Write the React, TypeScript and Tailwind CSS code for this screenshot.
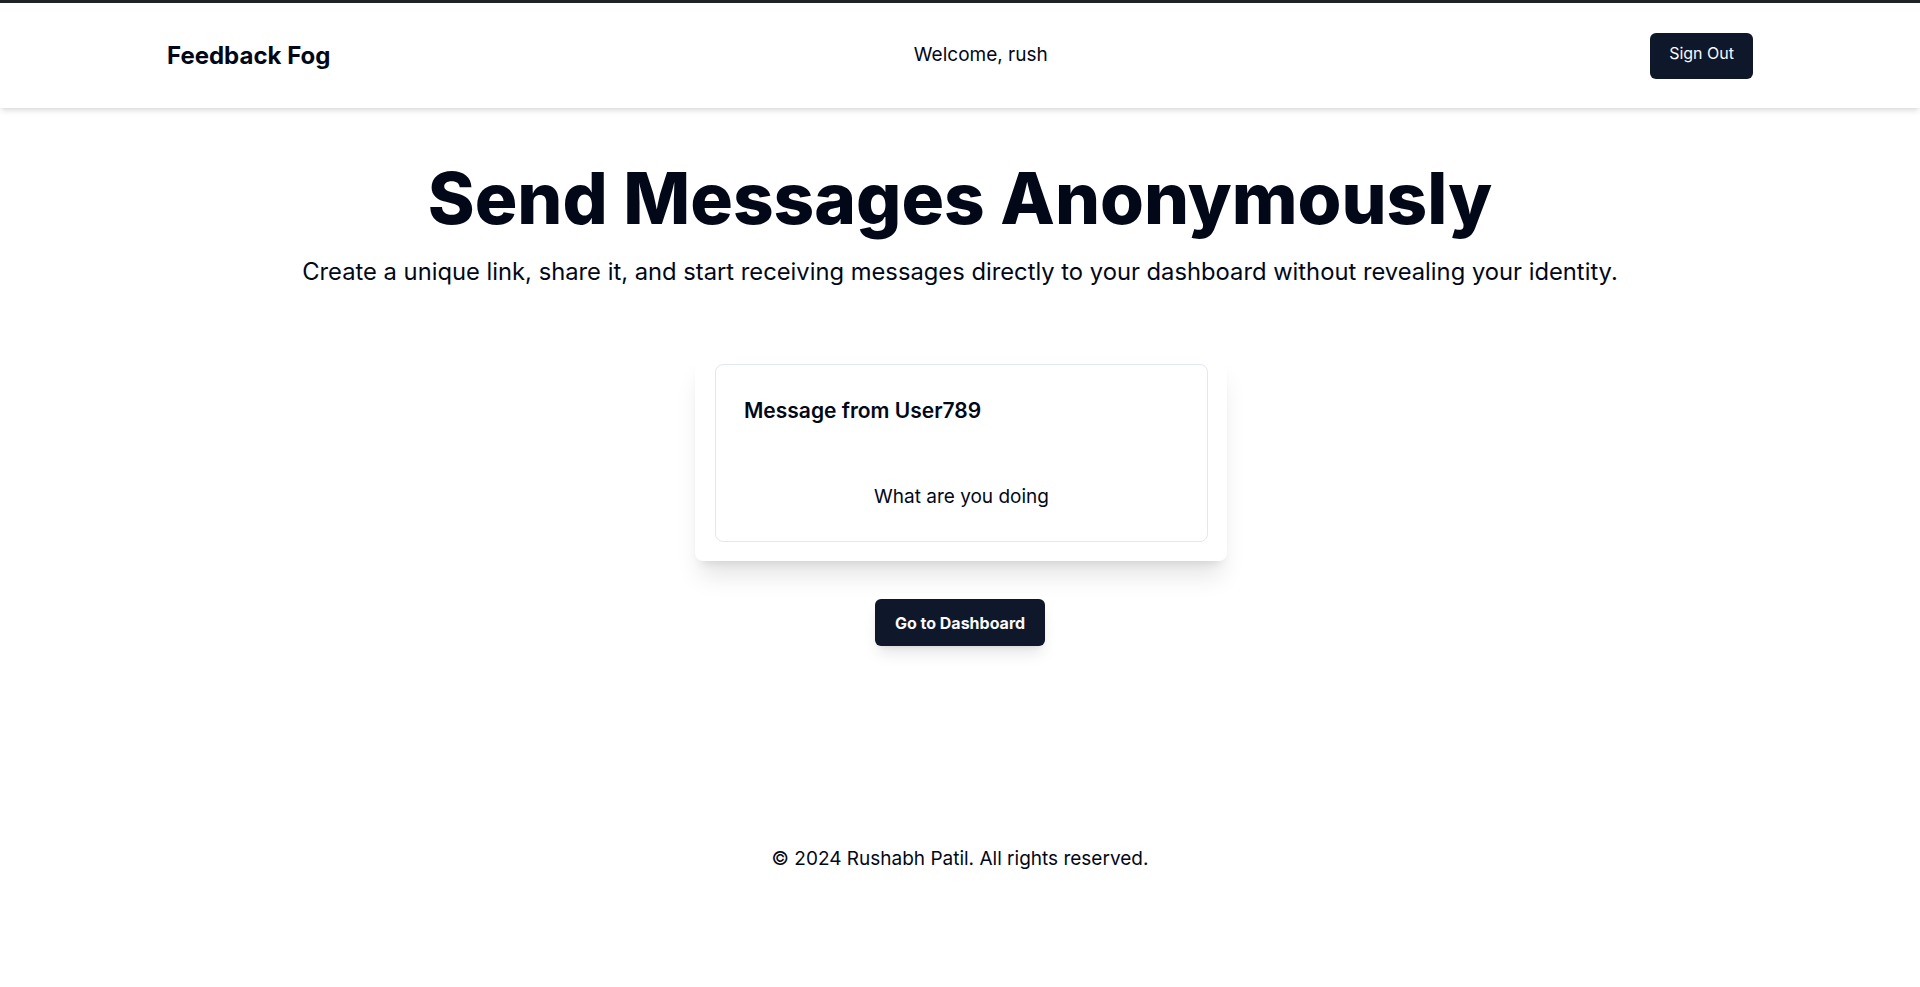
import React from "react";

export default function App() {
  return (
    <div className="min-h-screen bg-white flex flex-col font-['Inter',sans-serif] text-[#020817]">
      <div className="h-[3px] bg-[#1f2328]" />
      <nav className="h-[105px] bg-white shadow-md relative z-10">
        <div className="mx-auto w-[1586px] h-full flex items-center justify-between">
          <a className="text-2xl font-bold text-[#020817]">Feedback Fog</a>
          <span className="text-[19px] leading-7 text-[#020817] mr-[19px] mb-[2px]">Welcome, rush</span>
          <button className="h-[46px] px-[19px] pb-[5px] rounded-md bg-[#0f172a] text-[#f8fafc] text-base font-normal">
            Sign Out
          </button>
        </div>
      </nav>

      <main className="flex flex-col items-center pt-[55px]">
        <h1 className="text-[71px] leading-none font-extrabold text-[#020817] text-center">
          Send Messages Anonymously
        </h1>
        <p className="mt-[22px] text-[23.75px] leading-8 text-[#020817] text-center">
          Create a unique link, share it, and start receiving messages directly to your dashboard without revealing your identity.
        </p>

        <div className="mt-[67px] w-[532px] ml-[2px] bg-white rounded-lg shadow-xl pl-[20px] pr-[19px] pt-[9px] pb-[19px]">
          <div className="h-[178px] rounded-lg border border-[#e2e8f0] bg-white flex flex-col">
            <div className="px-[28px] pt-[35px]">
              <h3 className="text-[21px] leading-none font-semibold text-[#020817]">Message from User789</h3>
            </div>
            <div className="mt-[62px] text-center text-[19px] leading-7 text-[#020817]">What are you doing</div>
          </div>
        </div>

        <button className="mt-[38px] h-[47px] px-[20px] rounded-md bg-[#0f172a] text-[#f8fafc] text-base font-bold shadow-lg">
          Go to Dashboard
        </button>
      </main>

      <footer className="mt-[199px] text-center text-[19px] leading-7 text-[#020817]">
        © 2024 Rushabh Patil. All rights reserved.
      </footer>
    </div>
  );
}
